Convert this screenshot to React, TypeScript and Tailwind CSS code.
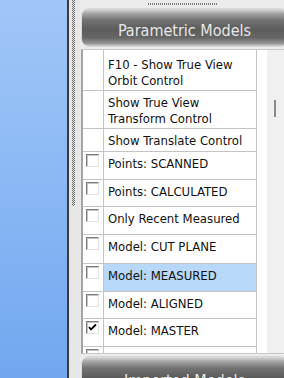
import React from "react";

type Row = {
  label: string[];
  h: string;
  pt: string;
  box?: boolean;
  checked?: boolean;
  selected?: boolean;
};

const rows: Row[] = [
  { label: ["F10 - Show True View", "Orbit Control"], h: "h-[41px]", pt: "pt-[7px]" },
  { label: ["Show True View", "Transform Control"], h: "h-[38px]", pt: "pt-[4px]" },
  { label: ["Show Translate Control"], h: "h-[23px]", pt: "pt-[4px]" },
  { label: ["Points: SCANNED"], h: "h-[28px]", pt: "pt-[4px]", box: true },
  { label: ["Points: CALCULATED"], h: "h-[27px]", pt: "pt-[4px]", box: true },
  { label: ["Only Recent Measured"], h: "h-[28px]", pt: "pt-[4px]", box: true },
  { label: ["Model: CUT PLANE"], h: "h-[29px]", pt: "pt-[4px]", box: true },
  { label: ["Model: MEASURED"], h: "h-[28px]", pt: "pt-[4px]", box: true, selected: true },
  { label: ["Model: ALIGNED"], h: "h-[27px]", pt: "pt-[4px]", box: true },
  { label: ["Model: MASTER"], h: "h-[28px]", pt: "pt-[4px]", box: true, checked: true },
  { label: [""], h: "h-[28px]", pt: "pt-[4px]", box: true },
];

const CheckBox = ({ checked }: { checked?: boolean }) => (
  <div className="w-[13px] h-[13px] border border-t-[#7c7c7c] border-l-[#7c7c7c] border-r-[#e2e2e2] border-b-[#e2e2e2] bg-white shadow-[inset_1px_1px_0_#c4c4c4] flex items-center justify-center">
    {checked && (
      <svg width="9" height="9" viewBox="0 0 9 9">
        <path d="M1 4 L3 6.5 L8 1.5" stroke="#000" strokeWidth="1.8" fill="none" />
      </svg>
    )}
  </div>
);

const headerBg =
  "bg-[linear-gradient(180deg,#dadada_0%,#a6a6a6_12%,#727272_30%,#5c5c5c_55%,#666666_78%,#949494_93%,#cccccc_100%)]";

export default function App() {
  return (
    <div className="w-[284px] h-[378px] flex overflow-hidden font-['DejaVu_Sans_Condensed','Liberation_Sans',sans-serif]">
      <div className="w-[67px] h-full bg-[linear-gradient(180deg,#a0c6f8_0%,#8ab8f4_50%,#72a6ef_100%)]" />
      <div className="w-[2px] h-full bg-[#3a3a3a]" />
      <div className="w-[11px] h-full bg-[#e6e6e6] flex pl-[3px]">
        <div className="w-[1px] h-[205px] bg-[linear-gradient(#6e6e6e_50%,transparent_50%)] bg-[length:1px_2px]" />
        <div className="w-[1px] h-[205px] mt-[1px] bg-[linear-gradient(#6e6e6e_50%,transparent_50%)] bg-[length:1px_2px]" />
        <div className="w-[1px] h-[205px] bg-[linear-gradient(#6e6e6e_50%,transparent_50%)] bg-[length:1px_2px]" />
      </div>
      <div className="flex-1 h-full bg-[#ebebeb] flex flex-col pl-[1px] overflow-hidden">
        <div className="h-[8px] shrink-0 flex flex-col items-center justify-center">
          <div className="w-[70px] h-[1px] bg-[linear-gradient(90deg,#7a7a7a_50%,transparent_50%)] bg-[length:2px_1px]" />
          <div className="w-[70px] h-[1px] ml-[1px] bg-[linear-gradient(90deg,#7a7a7a_50%,transparent_50%)] bg-[length:2px_1px]" />
        </div>
        <div
          className={`h-[39px] shrink-0 rounded-[8px] border border-[#d8d8d8] ${headerBg} flex items-center justify-center pt-[6px] text-[16px] text-[#e8e8e8] mr-[-4px]`}
        >
          Parametric Models
        </div>
        <div className="h-[2px] shrink-0" />
        <div className="h-[305px] shrink-0 flex bg-white border-t border-[#c8c8c8] border-l-2 border-l-[#a4a4a4] border-b border-b-[#c8c8c8] overflow-hidden">
          <div className="w-[174px] flex flex-col border-r border-[#c4c4c4]">
            {rows.map((r, i) => (
              <div key={i} className={`${r.h} shrink-0 flex border-b border-[#c4c4c4]`}>
                <div className="w-[21px] shrink-0 border-r border-[#c4c4c4] pl-[3px] pt-[2px]">
                  {r.box && <CheckBox checked={r.checked} />}
                </div>
                <div
                  className={`flex-1 pl-[4px] ${r.pt} text-[13px] leading-[16px] text-[#111] ${
                    r.selected ? "bg-[#b8d8fa]" : ""
                  }`}
                >
                  {r.label.map((l, j) => (
                    <div key={j} className="whitespace-nowrap">
                      {l}
                    </div>
                  ))}
                </div>
              </div>
            ))}
          </div>
          <div className="w-[10px]" />
          <div className="flex-1 bg-[#f0f0f0] pt-[50px] pl-[7px]">
            <div className="w-[2px] h-[17px] bg-[#8a8a8a]" />
          </div>
        </div>
        <div className="h-[2px] shrink-0" />
        <div
          className={`h-[39px] shrink-0 rounded-[8px] border border-[#d8d8d8] ${headerBg} flex items-start justify-center pt-[12px] text-[16px] text-[#e8e8e8] mr-[-4px]`}
        >
          Imported Models
        </div>
      </div>
    </div>
  );
}
